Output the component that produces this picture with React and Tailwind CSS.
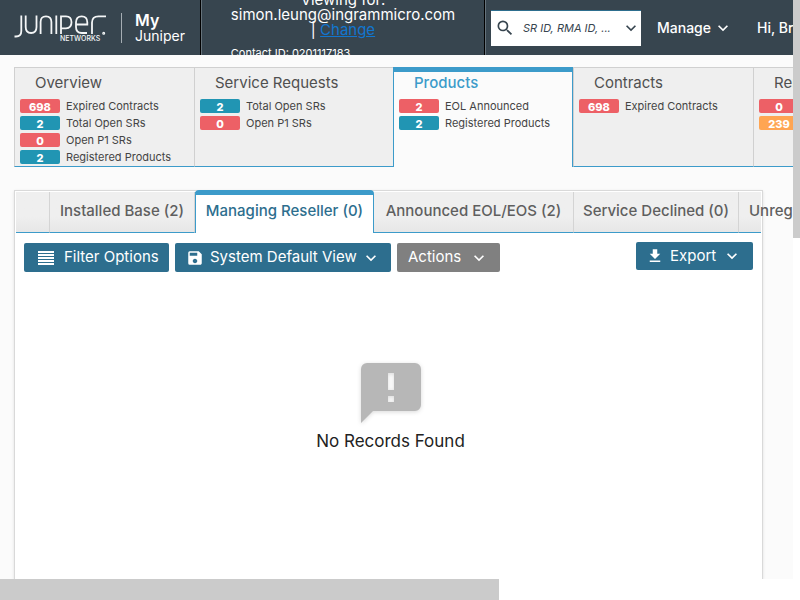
import { MdSearch, MdExpandMore, MdSave, MdFileDownload } from "react-icons/md";

const RED = "bg-[#ed6066]";
const TEAL = "bg-[#2195b3]";
const ORANGE = "bg-[#ffa552]";

const cards = [
  {
    title: "Overview",
    width: "w-[180px]",
    rows: [
      [698, RED, "Expired Contracts"],
      [2, TEAL, "Total Open SRs"],
      [0, RED, "Open P1 SRs"],
      [2, TEAL, "Registered Products"],
    ],
  },
  {
    title: "Service Requests",
    width: "w-[199px]",
    rows: [
      [2, TEAL, "Total Open SRs"],
      [0, RED, "Open P1 SRs"],
    ],
  },
  {
    title: "Products",
    width: "w-[180px]",
    active: true,
    rows: [
      [2, RED, "EOL Announced"],
      [2, TEAL, "Registered Products"],
    ],
  },
  { title: "Contracts", width: "w-[180px]", rows: [[698, RED, "Expired Contracts"]] },
  {
    title: "Renewals",
    width: "w-[180px]",
    rows: [
      [0, RED, "Expired"],
      [239, ORANGE, "Expiring"],
    ],
  },
];

const tabs = [
  { label: "", width: "w-[34px]" },
  { label: "Installed Base (2)", width: "w-[145px]" },
  { label: "Managing Reseller (0)", width: "w-[179px]", active: true },
  { label: "Announced EOL/EOS (2)", width: "w-[200px]" },
  { label: "Service Declined (0)", width: "w-[165px]" },
  { label: "Unregistered (0)", width: "min-w-0 flex-1", last: true },
];

function Logo() {
  return (
    <svg viewBox="0 0 95 30" className="h-[30px] w-[95px] shrink-0" fill="none" stroke="#f4f6f7" strokeWidth="1.800" role="img" aria-label="Juniper Networks">
      <path d="M7.300 2.500V18q0 5.500-5.300 5.500H.5" />
      <path d="M11.700 2.500V14q0 6 5.400 6t5.400-6V2.500" />
      <path d="M26.600 21V9q0-5.700 5.400-5.700T37.400 9v12" />
      <path d="M42.300 2.500V21" />
      <path d="M47 21V3.300h5q5.500 0 5.500 6t-5.500 6h-5" />
      <path d="M62 11.500h11.300V9.300q0-6-5.600-6T62 9.300V14q0 6 5.700 6H73" />
      <path d="M78 21V9.500q0-6.200 6.500-6.200H92" />
      <circle cx="89.700" cy="20.200" r="0.600" />
      <text x="46" y="28" fill="#f4f6f7" stroke="none" className="font-['Inter',sans-serif] text-[7px] font-medium">NETWORKS</text>
    </svg>
  );
}

function LinesIcon() {
  return (
    <svg viewBox="0 0 16 14" className="h-[14px] w-4 shrink-0" fill="currentColor" aria-hidden="true">
      <path d="M0 0h16v2H0zM0 3h16v2H0zM0 6h16v2H0zM0 9h16v2H0zM0 12h16v2H0z" />
    </svg>
  );
}

function NoticeIcon() {
  return (
    <svg viewBox="0 0 72 72" className="size-[72px] text-[#b7b7b7] drop-shadow-sm" fill="currentColor" fillRule="evenodd" aria-hidden="true">
      <path d="M12 6h48a6 6 0 0 1 6 6v36a6 6 0 0 1-6 6H18L6 66V12a6 6 0 0 1 6-6zm21 10v17h6V16zm0 23v6h6v-6z" />
    </svg>
  );
}

function Header() {
  return (
    <header className="flex h-[55px] shrink-0 overflow-hidden bg-[#37454f] text-white">
      <a href="#home" className="flex w-[201px] shrink-0 items-center border-r border-black pl-[14px]">
        <Logo />
        <span className="ml-3 flex h-[30px] flex-col justify-center border-l border-[#a5adb3] pl-[13px] text-[14px] leading-[15px]">
          <b className="text-base leading-[15px] font-semibold">My</b>
          <span>Juniper</span>
        </span>
      </a>
      <div className="flex w-[284px] shrink-0 flex-col items-center justify-center border-r border-l border-r-black border-l-[#66737c]">
        <div className="pb-0.5">
          <p className="text-center text-[15px] leading-[15px]">
            Viewing for:
            <br />
            simon.leung@ingrammicro.com
            <br />| <a href="#change" className="text-[#1276cf] underline">Change</a>
          </p>
          <p className="mt-[9px] text-[11px] leading-[15px]">Contact ID: 0201117183</p>
        </div>
      </div>
      <div className="flex shrink-0 items-center border-l border-[#66737c] pl-[5px]">
        <form className="flex h-9 w-[150px] items-center border-t border-[#2d6e8e] bg-white px-1 text-[#37454f]">
          <MdSearch className="size-5 shrink-0" />
          <input aria-label="Search" placeholder="SR ID, RMA ID, ..." className="ml-2 w-full min-w-0 text-[11px] italic outline-none placeholder:text-[#37454f]" />
          <button type="button" aria-label="Search options" className="-mr-1">
            <MdExpandMore className="size-5" />
          </button>
        </form>
        <button className="ml-4 flex items-center text-[14px] font-medium">
          Manage <MdExpandMore className="ml-0.5 size-5" />
        </button>
        <button className="ml-6 text-[14px] font-medium whitespace-nowrap">Hi, Brandon</button>
      </div>
    </header>
  );
}

function Card({ title, width, active, rows }) {
  return (
    <section
      className={`h-[100px] shrink-0 ${width} ${
        active
          ? "border-x border-t-[5px] border-[#3c9bca] bg-[#fbfbfb] pt-[2px] pl-[5px]"
          : "border-t border-b border-l border-[#d0d0d0] border-b-[#3c9bca] bg-[#efefef] pt-[6px] pl-[5px]"
      }`}
    >
      <h2 className={`pl-[15px] text-[15px] leading-[17px] ${active ? "font-medium text-[#3c9bca]" : "text-[#505050]"}`}>{title}</h2>
      <ul className="mt-2 flex flex-col gap-[3px]">
        {rows.map(([count, color, label]) => (
          <li key={label} className="flex h-[14px] items-center gap-1.5 text-[11px] whitespace-nowrap text-[#444]">
            <span className={`h-[14px] w-10 rounded-xs text-center font-extrabold leading-[16px] text-white ${color}`}>{count}</span>
            {label}
          </li>
        ))}
      </ul>
    </section>
  );
}

function Tab({ label, width, active, last }) {
  return (
    <button
      role="tab"
      aria-selected={Boolean(active)}
      aria-label={label || "Tab options"}
      className={`shrink-0 text-[15px] font-medium whitespace-nowrap ${width} ${
        active
          ? "-mt-0.5 h-[43px] rounded-t-sm border-x border-t-[5px] border-[#3c9bca] bg-white pb-[5px] text-[#2d6e8e]"
          : `h-[41px] border-b border-[#3c9bca] pb-0.5 text-[#5f5f5f] ${last ? "pl-2.5 text-left" : "border-r border-r-[#d4d4d4]"}`
      }`}
    >
      {label}
    </button>
  );
}

function Panel() {
  return (
    <section className="mr-[30px] ml-[14px] mt-[23px] flex min-h-0 flex-1 flex-col border-x border-t border-[#d9d9d9] bg-white shadow-sm">
      <div role="tablist" className="mx-px mt-px flex h-[41px] shrink-0 bg-linear-to-b from-[#efefef] from-60% to-[#e6e6e6]">
        {tabs.map((tab) => (
          <Tab key={tab.label} {...tab} />
        ))}
      </div>
      <div className="flex items-start gap-1.5 px-[9px] pt-[10px] text-[15px] text-white">
        <button className="flex h-[29px] w-[145px] items-center gap-[10px] rounded-xs bg-[#2d6e8e] pl-[14px]">
          <LinesIcon />
          Filter Options
        </button>
        <button className="flex h-[29px] w-[216px] items-center rounded-xs bg-[#2d6e8e] pl-[11px]">
          <MdSave className="mr-1.5 size-[18px]" />
          System Default View
          <MdExpandMore className="ml-1 size-5" />
        </button>
        <button className="flex h-[29px] w-[103px] items-center gap-2 rounded-xs bg-[#808080] pl-[11px]">
          Actions
          <MdExpandMore className="size-5" />
        </button>
        <button className="-mt-px ml-auto flex h-7 w-[117px] items-center rounded-xs bg-[#2d6e8e] pl-[10px]">
          <MdFileDownload className="mr-1.5 size-[18px]" />
          Export
          <MdExpandMore className="ml-1.5 size-5" />
        </button>
      </div>
      <div className="flex flex-col items-center pt-[85px] pl-1">
        <NoticeIcon />
        <p className="text-[17px] leading-6 text-[#222]">No Records Found</p>
      </div>
    </section>
  );
}

export default function App() {
  return (
    <div className="flex h-screen flex-col overflow-hidden bg-white font-['Inter',sans-serif]">
      <div className="flex min-h-0 flex-1">
        <main className="flex min-w-0 flex-1 flex-col overflow-hidden bg-[#fbfbfb]">
          <Header />
          <div className="mt-3 flex shrink-0 pl-[14px]">
            {cards.map((card) => (
              <Card key={card.title} {...card} />
            ))}
          </div>
          <Panel />
        </main>
        <div className="w-[7px] shrink-0">
          <div className="h-[238px] bg-[#cbcbcb]" />
        </div>
      </div>
      <div className="h-[21px] shrink-0">
        <div className="h-full w-[499px] bg-[#cbcbcb]" />
      </div>
    </div>
  );
}
